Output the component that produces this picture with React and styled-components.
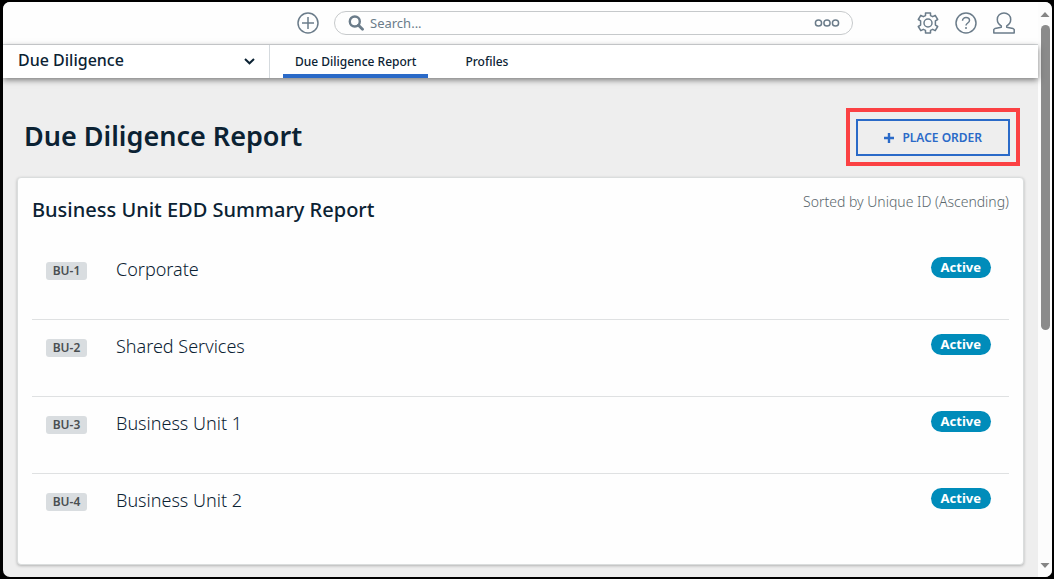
import React from "react";
import styled, { createGlobalStyle } from "styled-components";

const ink = "#0b2233";
const slate = "#6b7c8a";
const blue = "#2a6ac8";

const GlobalStyle = createGlobalStyle`
  * { box-sizing: border-box; }
  body {
    margin: 0;
    background: #000;
    color: ${ink};
    font-family: "Noto Sans", "Open Sans", sans-serif;
  }
  button, input, select { font: inherit; color: inherit; }
`;

const Page = styled.div`
  min-height: 100vh;
  padding: 2px 2px 2px 3px;
  display: flex;
`;

const Window = styled.div`
  flex: 1;
  min-width: 0;
  display: flex;
  border-radius: 7px;
  overflow: hidden;
  background: #eee;
`;

const Main = styled.div`
  flex: 1;
  min-width: 0;
`;

const Header = styled.header`
  display: flex;
  align-items: center;
  height: 43px;
  padding: 0 23px 0 294px;
  background: #fefefe;
  border-bottom: 1px solid #d9dcde;
`;

const IconButton = styled.button`
  display: flex;
  flex: none;
  padding: 0;
  border: 0;
  background: none;
  color: ${slate};
  cursor: pointer;
`;

const SearchBox = styled.label`
  flex: 1;
  min-width: 0;
  display: flex;
  align-items: center;
  gap: 6px;
  height: 24px;
  margin: 0 64px 0 15px;
  padding: 0 12px 0 13px;
  border: 1px solid #c6c9cb;
  border-radius: 12px;
  color: ${slate};
`;

const SearchInput = styled.input`
  flex: 1;
  min-width: 0;
  padding: 0;
  border: 0;
  outline: 0;
  background: none;
  font-size: 13px;
  line-height: 20px;
  &::placeholder { color: ${slate}; opacity: 1; }
`;

const HeaderActions = styled.div`
  display: flex;
  gap: 16px;
`;

const NavBar = styled.nav`
  position: relative;
  display: flex;
  height: 33px;
  background: #fff;
  box-shadow: 0 2px 6px rgba(0, 0, 0, 0.5);
`;

const AppPicker = styled.div`
  display: flex;
  align-items: center;
  width: 267px;
  padding-right: 14px;
  border-right: 1px solid #d5dade;
`;

const AppSelect = styled.select`
  flex: 1;
  height: 30px;
  padding: 0 0 3px 15px;
  border: 0;
  outline: 0;
  appearance: none;
  background: none;
  font-size: 16px;
  font-weight: 500;
  line-height: 24px;
`;

const Tabs = styled.div`
  display: flex;
  gap: 25px;
  padding-left: 13px;
`;

const Tab = styled.a`
  padding: 0 12px;
  border-bottom: 4px solid ${(p) => (p.$active ? blue : "transparent")};
  color: ${ink};
  font-size: 12px;
  font-weight: 500;
  line-height: 34px;
  text-decoration: none;
`;

const Content = styled.main`
  padding: 30px 14px 12px;
`;

const TitleRow = styled.div`
  display: flex;
  align-items: center;
  justify-content: space-between;
  padding: 0 4px 0 7px;
  margin-bottom: 11px;
`;

const PageTitle = styled.h1`
  margin: 0;
  padding-bottom: 2px;
  font-size: 27px;
  font-weight: 600;
  line-height: 38px;
`;

const Highlight = styled.div`
  padding: 7px 6px 6px;
  border: 4px solid #fb4143;
`;

const OrderButton = styled.button`
  display: flex;
  align-items: center;
  gap: 8px;
  height: 37px;
  padding: 0 26px;
  border: 2px solid ${blue};
  background: #eee;
  color: ${blue};
  font-size: 12px;
  font-weight: 600;
  cursor: pointer;
`;

const Card = styled.section`
  padding: 14px;
  border: 1px solid #dadddd;
  border-radius: 4px;
  background: #fefefe;
  box-shadow: 0 1px 3px rgba(0, 0, 0, 0.25);
`;

const CardHeader = styled.div`
  display: flex;
  justify-content: space-between;
  height: 50px;
`;

const CardTitle = styled.h2`
  margin: 0;
  font-size: 20px;
  font-weight: 500;
  line-height: 36px;
`;

const SortNote = styled.span`
  color: #59666c;
  font-size: 14px;
  font-weight: 300;
  line-height: 20px;
`;

const List = styled.ul`
  margin: 0;
  padding: 0;
  list-style: none;
`;

const Row = styled.li`
  display: flex;
  align-items: flex-start;
  height: 77px;
  padding: 15px 18px 0 14px;
  & + & { border-top: 1px solid #dfe1e2; padding-top: 14px; }
`;

const IdTag = styled.span`
  width: 41px;
  margin-top: 5px;
  border-radius: 3px;
  background: #d9dde0;
  color: #4a4f52;
  font-size: 12px;
  font-weight: 600;
  line-height: 18px;
  text-align: center;
`;

const UnitName = styled.span`
  flex: 1;
  margin-left: 29px;
  font-size: 18px;
  font-weight: 300;
  line-height: 24px;
`;

const Status = styled.span`
  padding: 0 10px;
  border-radius: 11px;
  background: #008cba;
  color: #fff;
  font-size: 13px;
  font-weight: 700;
  line-height: 21px;
`;

const ScrollTrack = styled.div`
  display: flex;
  flex-direction: column;
  align-items: center;
  width: 14px;
  padding: 10px 0 9px;
  background: #fcfcfc;
`;

const ScrollThumb = styled.div`
  flex: 304;
  width: 9px;
  margin-top: 8px;
  border-radius: 5px;
  background: #8b8b8b;
`;

const ScrollRest = styled.div`
  flex: 233;
`;

const Arrow = ({ down }) => (
  <svg width="10" height="5" viewBox="0 0 10 5" fill="#858585">
    <path d={down ? "M0.5 0h9L5 5z" : "M0.5 5h9L5 0z"} />
  </svg>
);

const PlusCircle = () => (
  <svg width="22" height="22" viewBox="0 0 22 22" fill="none" stroke="currentColor" strokeWidth="1.5">
    <circle cx="11" cy="11" r="10" />
    <path d="M11 5v12M5 11h12" />
  </svg>
);

const Magnifier = () => (
  <svg width="16" height="16" viewBox="0 0 16 16" fill="none" stroke="currentColor">
    <circle cx="6.8" cy="6.5" r="5" strokeWidth="2.4" />
    <path d="M10.5 10.3l4 4" strokeWidth="2.8" strokeLinecap="round" />
  </svg>
);

const ThreeRings = () => (
  <svg width="26" height="8" viewBox="0 0 26 8" fill="none" stroke="currentColor" strokeWidth="1.5">
    <circle cx="4.5" cy="4" r="3.1" />
    <circle cx="13" cy="4" r="3.1" />
    <circle cx="21.5" cy="4" r="3.1" />
  </svg>
);

const Gear = () => (
  <svg width="22" height="22" viewBox="0 0 22 22" fill="none" stroke="currentColor" strokeWidth="1.5" strokeLinejoin="round">
    <circle cx="11" cy="11" r="4" />
    <path d="M8.500 1h5v2.600l2.200 1.100 2.500-1.400 2.500 4.200-2.300 1.400v4.200l2.300 1.400-2.500 4.200-2.500-1.400-2.200 1.100V21h-5v-2.600l-2.200-1.100-2.500 1.400-2.500-4.200 2.300-1.400V8.900L1.300 7.500l2.500-4.200 2.500 1.400 2.200-1.100z" />
  </svg>
);

const Question = () => (
  <svg width="22" height="22" viewBox="0 0 22 22" fill="none" stroke="currentColor" strokeWidth="1.5">
    <circle cx="11" cy="11" r="10" />
    <path d="M7.500 8.800C7.500 6.800 9 5.600 11 5.600s3.500 1.200 3.500 2.900c0 2.500-3.500 2.500-3.500 5" />
    <circle cx="11" cy="16" r="1" fill="currentColor" stroke="none" />
  </svg>
);

const Person = () => (
  <svg width="22" height="22" viewBox="0 0 22 22" fill="none" stroke="currentColor" strokeWidth="1.5" strokeLinejoin="round">
    <path d="M8.300 13.800C5.500 12.400 4.300 10 4.300 7.500 4.300 3.700 7.200 1 11 1s6.700 2.700 6.700 6.500c0 2.500-1.200 4.900-4 6.300v1.400l6.300 1.300 1.200 1V21H.8v-3.500l1.200-1 6.300-1.300z" />
  </svg>
);

const Chevron = () => (
  <svg width="11" height="7" viewBox="0 0 11 7" fill="none" stroke={ink} strokeWidth="2">
    <path d="M1 1l4.500 4.300L10 1" />
  </svg>
);

const Plus = () => (
  <svg width="10" height="10" viewBox="0 0 10 10" stroke="currentColor" strokeWidth="2.400">
    <path d="M5 0v10M0 5h10" />
  </svg>
);

const units = [
  { id: "BU-1", name: "Corporate" },
  { id: "BU-2", name: "Shared Services" },
  { id: "BU-3", name: "Business Unit 1" },
  { id: "BU-4", name: "Business Unit 2" },
];

export default function App() {
  return (
    <Page>
      <GlobalStyle />
      <Window>
        <Main>
          <Header>
            <IconButton aria-label="Create"><PlusCircle /></IconButton>
            <SearchBox>
              <Magnifier />
              <SearchInput type="text" aria-label="Search" placeholder="Search..." />
              <IconButton aria-label="Search options"><ThreeRings /></IconButton>
            </SearchBox>
            <HeaderActions>
              <IconButton aria-label="Settings"><Gear /></IconButton>
              <IconButton aria-label="Help"><Question /></IconButton>
              <IconButton aria-label="Account"><Person /></IconButton>
            </HeaderActions>
          </Header>
          <NavBar>
            <AppPicker>
              <AppSelect aria-label="Application" defaultValue="Due Diligence">
                <option>Due Diligence</option>
              </AppSelect>
              <Chevron />
            </AppPicker>
            <Tabs>
              <Tab href="#report" $active>Due Diligence Report</Tab>
              <Tab href="#profiles">Profiles</Tab>
            </Tabs>
          </NavBar>
          <Content>
            <TitleRow>
              <PageTitle>Due Diligence Report</PageTitle>
              <Highlight>
                <OrderButton><Plus />PLACE ORDER</OrderButton>
              </Highlight>
            </TitleRow>
            <Card>
              <CardHeader>
                <CardTitle>Business Unit EDD Summary Report</CardTitle>
                <SortNote>Sorted by Unique ID (Ascending)</SortNote>
              </CardHeader>
              <List>
                {units.map((u) => (
                  <Row key={u.id}>
                    <IdTag>{u.id}</IdTag>
                    <UnitName>{u.name}</UnitName>
                    <Status>Active</Status>
                  </Row>
                ))}
              </List>
            </Card>
          </Content>
        </Main>
        <ScrollTrack>
          <Arrow />
          <ScrollThumb />
          <ScrollRest />
          <Arrow down />
        </ScrollTrack>
      </Window>
    </Page>
  );
}
